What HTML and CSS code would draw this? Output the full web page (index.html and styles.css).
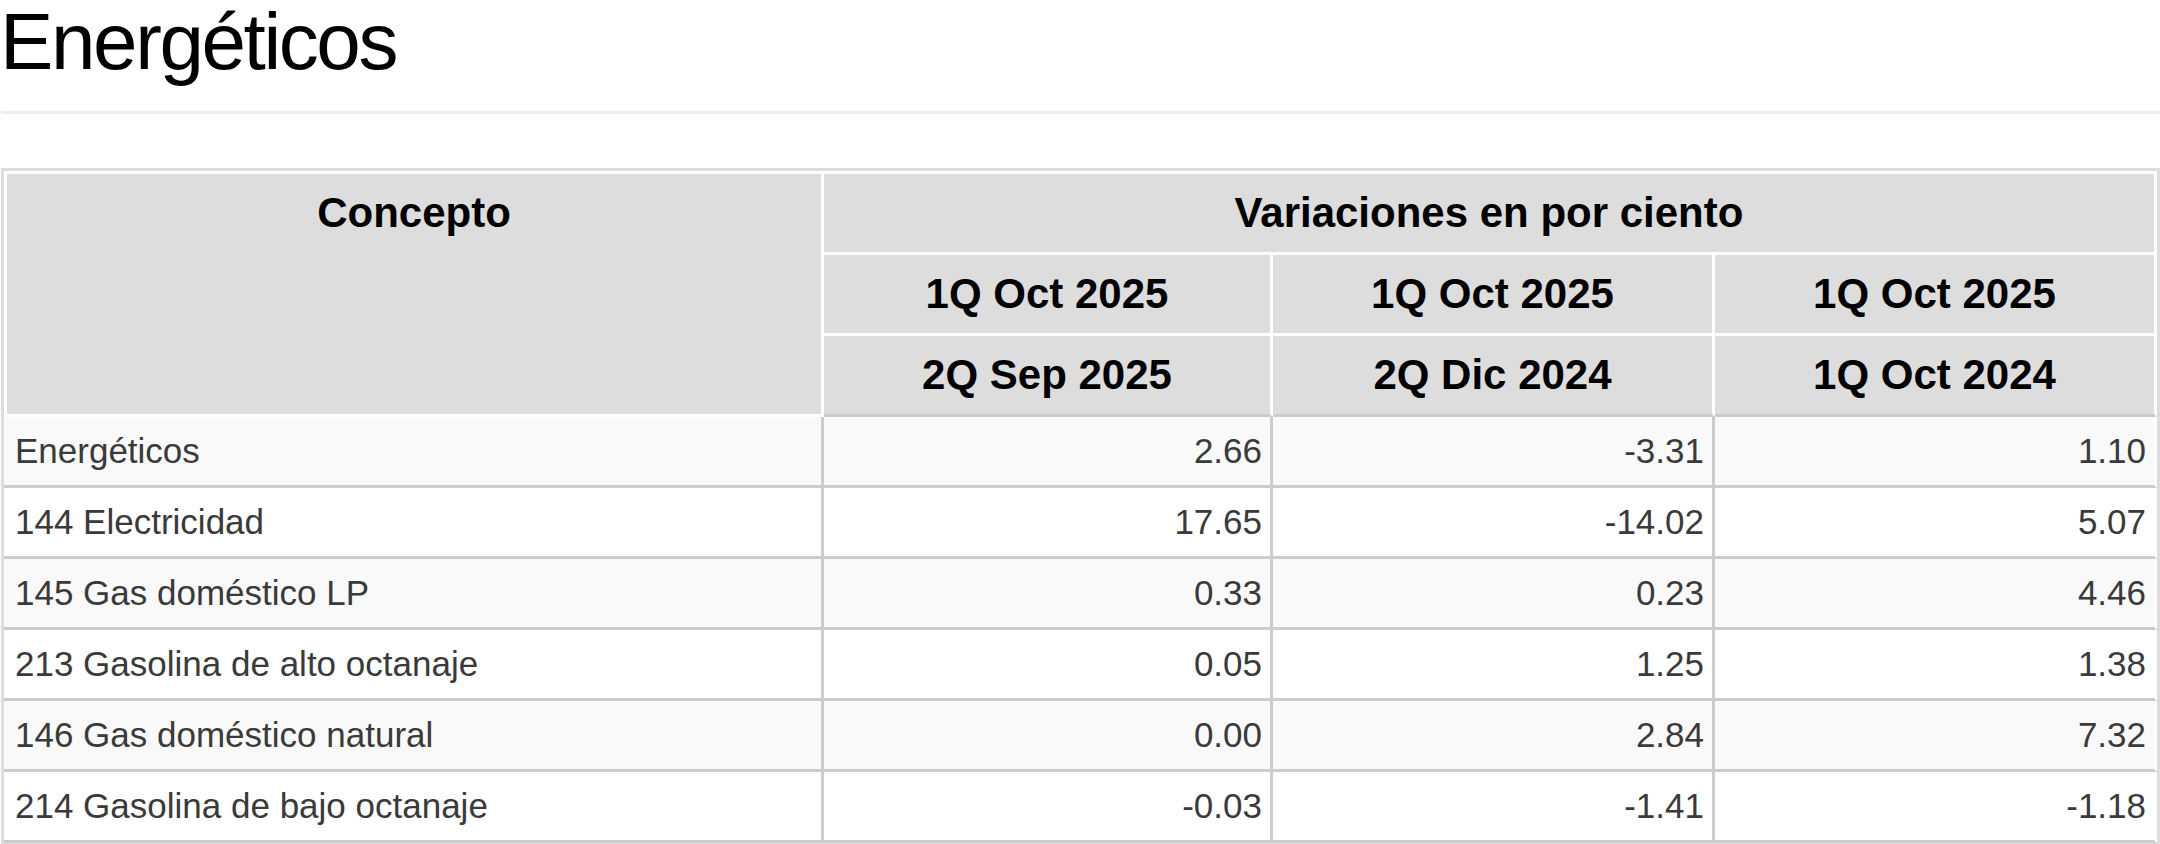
FILE: index.html
```html
<!DOCTYPE html>
<html lang="es">
<head>
<meta charset="utf-8">
<title>Energéticos</title>
<link rel="stylesheet" href="styles.css">
</head>
<body>
<div class="page">
  <h1 class="title">Energéticos</h1>
  <table class="data">
    <colgroup>
      <col class="c1">
      <col class="c2">
      <col class="c3">
      <col class="c4">
    </colgroup>
    <thead>
      <tr class="top">
        <th rowspan="3" class="concepto">Concepto</th>
        <th colspan="3">Variaciones en por ciento</th>
      </tr>
      <tr>
        <th>1Q Oct 2025</th>
        <th>1Q Oct 2025</th>
        <th>1Q Oct 2025</th>
      </tr>
      <tr class="sub">
        <th>2Q Sep 2025</th>
        <th>2Q Dic 2024</th>
        <th>1Q Oct 2024</th>
      </tr>
    </thead>
    <tbody>
      <tr><td class="name">Energéticos</td><td>2.66</td><td>-3.31</td><td class="last">1.10</td></tr>
      <tr><td class="name">144 Electricidad</td><td>17.65</td><td>-14.02</td><td class="last">5.07</td></tr>
      <tr><td class="name">145 Gas doméstico LP</td><td>0.33</td><td>0.23</td><td class="last">4.46</td></tr>
      <tr><td class="name">213 Gasolina de alto octanaje</td><td>0.05</td><td>1.25</td><td class="last">1.38</td></tr>
      <tr><td class="name">146 Gas doméstico natural</td><td>0.00</td><td>2.84</td><td class="last">7.32</td></tr>
      <tr><td class="name">214 Gasolina de bajo octanaje</td><td>-0.03</td><td>-1.41</td><td class="last">-1.18</td></tr>
    </tbody>
  </table>
</div>
</body>
</html>
```

FILE: styles.css
```css
html, body {
  margin: 0;
  padding: 0;
  background: #fff;
}

body {
  font-family: "Liberation Sans", Arial, Helvetica, sans-serif;
  color: #000;
}

.page {
  padding-left: 1px;
}

.title {
  margin: 0 0 54px;
  padding: 0 0 27px;
  font-size: 80px;
  font-weight: 400;
  line-height: 84px;
  letter-spacing: -2.4px;
  text-indent: -1px;
  color: #000;
  border-bottom: 3px solid #eee;
}

.data {
  width: 2159px;
  table-layout: fixed;
  border-collapse: separate;
  border-spacing: 0;
  border: 3px solid #ddd;
}

.c1 { width: 820px; }
.c2 { width: 449px; }
.c3 { width: 442px; }
.c4 { width: 442px; }

.data th {
  background: #ddd;
  color: #000;
  font-size: 42px;
  font-weight: 700;
  line-height: 48px;
  padding: 15px 0;
  text-align: center;
  vertical-align: middle;
  border-right: 3px solid #fff;
  border-bottom: 3px solid #fff;
}

.data .top th {
  border-top: 3px solid #fff;
}

.data th.concepto {
  vertical-align: top;
  border-left: 3px solid #fff;
}

.data .sub th {
  border-bottom-color: #ccc;
}

.data td {
  font-size: 35px;
  line-height: 40px;
  padding: 14px 8px;
  color: #3a3a3a;
  text-align: right;
  white-space: nowrap;
  border-right: 3px solid #ccc;
  border-bottom: 3px solid #ccc;
}

.data tbody tr:nth-child(odd) td {
  background: #f9f9f9;
}

.data td.name {
  text-align: left;
  padding-left: 11px;
}

.data td.last {
  border-right-color: #fff;
}
```
